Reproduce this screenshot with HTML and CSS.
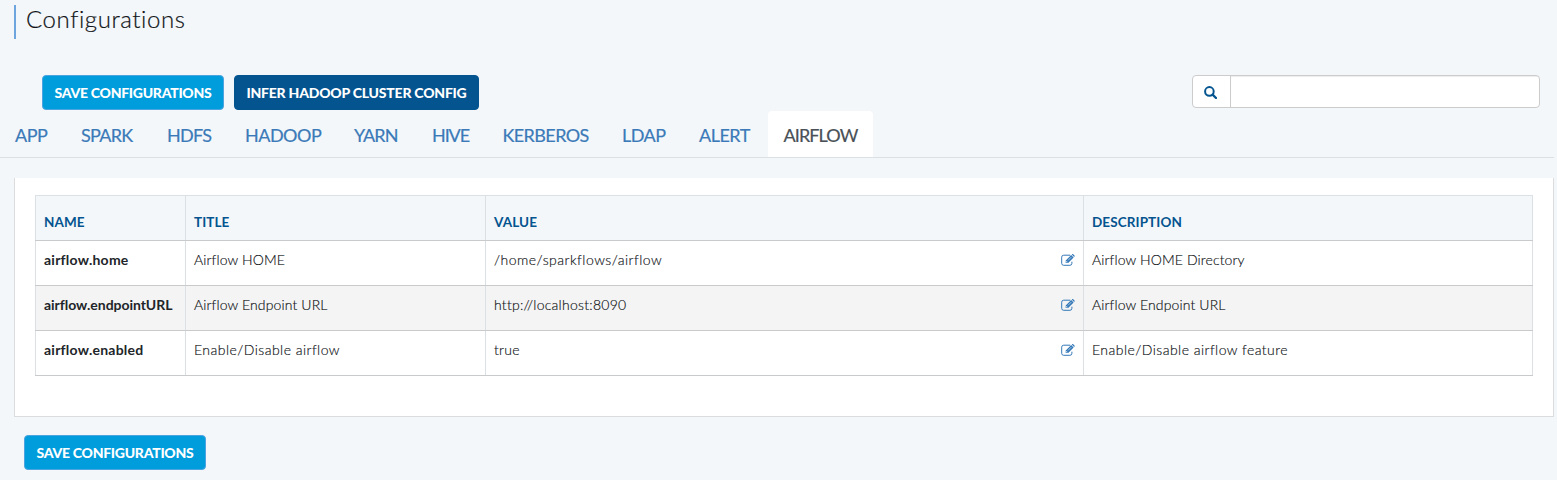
FILE: index.html
```html
<!DOCTYPE html>
<html lang="en">
<head>
<meta charset="utf-8">
<title>Configurations</title>
<link rel="stylesheet" href="styles.css">
</head>
<body>
<svg class="sprite" aria-hidden="true">
  <symbol id="edit" viewBox="0 0 14 12">
    <path d="M9.3 1.2H2.7Q.7 1.2.7 3.2v6.1q0 2 2 2h6.2q2 0 2-2V7.7" fill="none" stroke="currentColor" stroke-width="1"/>
    <path d="M4.7 9V6.6L10.2 1.1 12.6 3.5 7.1 9zM10.8.5l.5-.4q.5-.3.9.1l1.3 1.3q.4.4 0 .9l-.4.5z" fill="currentColor"/>
    <path d="M5.5 7v1.2h1.2M7 6.4l3.3-3.3" fill="none" stroke="#fff" stroke-width=".6"/>
  </symbol>
</svg>
<header class="page-title"><h1>Configurations</h1></header>
<div class="toolbar">
  <button class="btn save">SAVE CONFIGURATIONS</button>
  <button class="btn infer">INFER HADOOP CLUSTER CONFIG</button>
  <div class="search">
    <span class="addon"><svg width="13" height="13" viewBox="0 0 13 13"><circle cx="5.4" cy="5.4" r="4.3" fill="none" stroke="currentColor" stroke-width="2"/><path d="M8.6 8.6l3.4 3.4" stroke="currentColor" stroke-width="2.3" stroke-linecap="round"/></svg></span>
    <input type="text" aria-label="Search">
  </div>
</div>
<nav class="tabs">
  <a class="app">APP</a><a class="spark">SPARK</a><a class="hdfs">HDFS</a><a class="hadoop">HADOOP</a><a class="yarn">YARN</a><a class="hive">HIVE</a><a class="kerberos">KERBEROS</a><a class="ldap">LDAP</a><a class="alert">ALERT</a><a class="airflow active">AIRFLOW</a>
</nav>
<main class="panel">
  <table>
    <colgroup><col class="c-name"><col class="c-title"><col class="c-value"><col></colgroup>
    <thead><tr><th>NAME</th><th>TITLE</th><th>VALUE</th><th>DESCRIPTION</th></tr></thead>
    <tbody>
      <tr><td class="name">airflow.home</td><td>Airflow HOME</td><td><div class="value path"><span>/home/sparkflows/airflow</span><svg class="edit"><use href="#edit"/></svg></div></td><td>Airflow HOME Directory</td></tr>
      <tr><td class="name tight">airflow.endpointURL</td><td>Airflow Endpoint URL</td><td><div class="value url"><span>http://localhost:8090</span><svg class="edit"><use href="#edit"/></svg></div></td><td>Airflow Endpoint URL</td></tr>
      <tr><td class="name">airflow.enabled</td><td class="wide">Enable/Disable airflow</td><td><div class="value"><span>true</span><svg class="edit"><use href="#edit"/></svg></div></td><td class="wide">Enable/Disable airflow feature</td></tr>
    </tbody>
  </table>
</main>
<footer><button class="btn save">SAVE CONFIGURATIONS</button></footer>
</body>
</html>
```
FILE: styles.css
```css
* { box-sizing: border-box; }
body { margin: 0; height: 480px; overflow: hidden; background: #f3f7fa; color: #212529; font-family: Lato, "Open Sans", sans-serif; }
.sprite { display: none; }
.page-title { margin: 5px 0 0 14px; height: 34px; border-left: 2px solid #6fa5df; padding-left: 10px; }
h1 { margin: 0; font-size: 24px; font-weight: 300; line-height: 28px; letter-spacing: .58px; color: #111518; -webkit-text-stroke: .2px currentColor; }
.toolbar { display: flex; align-items: flex-start; gap: 10px; height: 36px; margin: 36px 17px 0 42px; }
.btn { height: 35px; padding: 0 0 1px; border: 1px solid #4ba3df; border-radius: 4px; background: #009ddc; color: #fff; font: 900 14px Lato, sans-serif; text-align: center; white-space: nowrap; }
.save { width: 182px; letter-spacing: -.28px; }
.infer { width: 245px; background: #04548f; border-color: #04548f; letter-spacing: -.22px; }
.search { display: flex; width: 348px; height: 33px; margin-left: auto; border: 1px solid #ccc; border-radius: 4px; background: #fff; overflow: hidden; }
.addon { display: flex; align-items: center; justify-content: center; width: 38px; padding: 1px 2px 0 0; border-right: 1px solid #ccc; color: #04548f; }
.search input { flex: 1; min-width: 0; border: 0; background: transparent; box-shadow: inset 0 1px 1px rgba(0,0,0,.075); }
.tabs { display: grid; grid-template-columns: 66px 86px 78px 109px 78px 70px 120px 77px 84px 105px; width: 1554px; height: 47px; border-bottom: 1px solid #dbe0e4; }
.tabs a { height: 46px; padding-left: 15px; color: #3b7ab8; font-size: 18px; line-height: 48px; white-space: nowrap; letter-spacing: -.5px; -webkit-text-stroke: .2px currentColor; }
.tabs .spark, .tabs .hdfs { letter-spacing: -.7px; }
.tabs .yarn, .tabs .airflow { letter-spacing: -.9px; }
.tabs .hive { letter-spacing: -1.1px; }
.tabs .kerberos { letter-spacing: -.6px; }
.tabs .kerberos, .tabs .airflow { padding-left: 15.5px; }
.tabs .active { background: #fff; border-radius: 4px 4px 0 0; color: #495057; }
.panel { width: 1540px; height: 239px; margin: 20px 0 0 14px; padding: 17px 20px; border: 1px solid #dbdcde; border-top: 0; background: #fff; }
table { width: 1498px; border-collapse: collapse; table-layout: fixed; font-size: 14px; }
.c-name { width: 150px; }
.c-title { width: 300px; }
.c-value { width: 598px; }
th, td { height: 45px; padding: 0 8px; border: 1px solid #dbe0e4; text-align: left; white-space: nowrap; }
th { padding-top: 7px; background: #f3f7fa; border-bottom-color: #c8cacc; color: #04548f; font-size: 13.5px; font-weight: 700; letter-spacing: .1px; }
td { padding-bottom: 7px; border-bottom-color: #c8cacc; border-top-color: #c8cacc; color: #0c1013; font-weight: 300; letter-spacing: .13px; -webkit-text-stroke: .15px currentColor; }
.wide { letter-spacing: .46px; }
.name { font-weight: 700; letter-spacing: .24px; -webkit-text-stroke: 0; color: #212529; }
.tight { letter-spacing: -.03px; }
tbody tr:nth-child(even) { background: #f4f4f4; }
.value { display: flex; align-items: center; justify-content: space-between; letter-spacing: .3px; }
.path { letter-spacing: .48px; }
.url { letter-spacing: .26px; }
.edit { width: 14px; height: 12px; color: #3478b7; }
footer { margin: 18px 0 0 24px; }
```
